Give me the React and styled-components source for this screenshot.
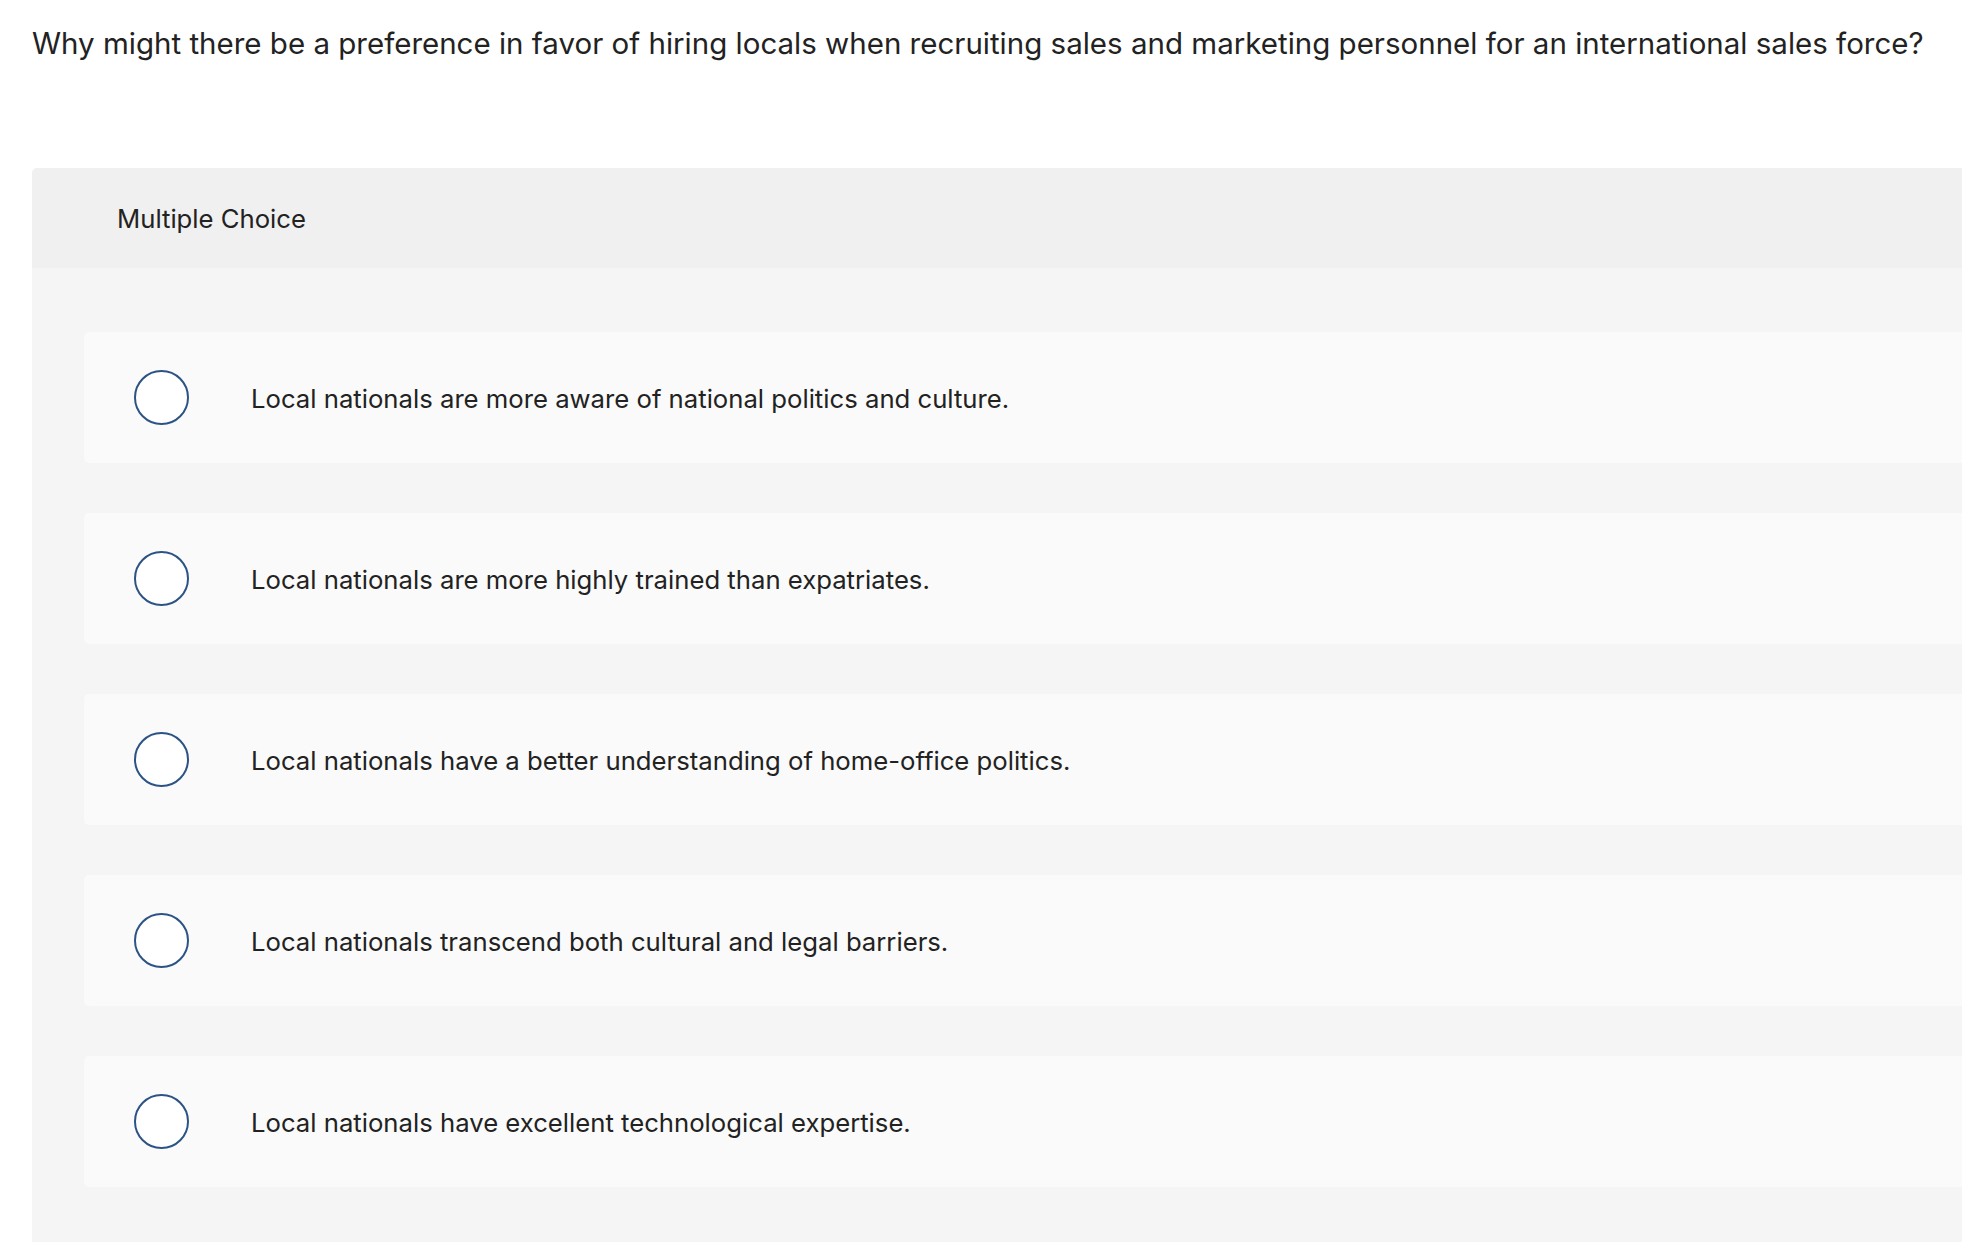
import styled, { createGlobalStyle } from 'styled-components';

const GlobalStyle = createGlobalStyle`
    html, body {
        margin:0;
        padding:0;
        background:#fff;
        overflow:hidden;
    }
    body{
        font-family:Inter, Lato, "Open Sans", sans-serif;
        color:#222;
    }
`

const options = [
    'Local nationals are more aware of national politics and culture.',
    'Local nationals are more highly trained than expatriates.',
    'Local nationals have a better understanding of home-office politics.',
    'Local nationals transcend both cultural and legal barriers.',
    'Local nationals have excellent technological expertise.',
];

const App = () => {
    return (
        <>
            <GlobalStyle />
            <Page>
                <Question>Why might there be a preference in favor of hiring locals when recruiting sales and marketing personnel for an international sales force?</Question>
                <Panel>
                    <PanelHeader>Multiple Choice</PanelHeader>
                    <OptionList>
                        {options.map((text, i) => (
                            <Option key={i}>
                                <Radio />
                                <OptionText>{text}</OptionText>
                            </Option>
                        ))}
                    </OptionList>
                </Panel>
            </Page>
        </>
    )
}

export default App;

const Page = styled.div`
    padding:27px 0 0 32px;
    width:2200px;
`

const Question = styled.h1`
    margin:0 0 109px 0;
    font-size:29.5px;
    font-weight:400;
    line-height:32px;
    color:#222;
    white-space:nowrap;
`

const Panel = styled.section`
    border-radius:5px 0 0 0;
    overflow:hidden;
    background:#f5f5f5;
    min-height:1100px;
`

const PanelHeader = styled.div`
    background:#f0f0f0;
    height:100px;
    box-sizing:border-box;
    padding:1px 0 0 85px;
    display:flex;
    align-items:center;
    font-size:25.7px;
    color:#222;
`

const OptionList = styled.div`
    display:flex;
    flex-direction:column;
    gap:50px;
    padding:64px 0 0 52px;
`

const Option = styled.div`
    display:flex;
    align-items:center;
    height:131px;
    box-sizing:border-box;
    padding-left:50px;
    background:#fafafa;
    border-radius:5px 0 0 5px;
`

const Radio = styled.span`
    display:block;
    width:55px;
    height:55px;
    box-sizing:border-box;
    border:2px solid #2c5385;
    border-radius:50%;
    background:#fff;
    flex-shrink:0;
`

const OptionText = styled.span`
    margin-left:62px;
    padding-top:2px;
    font-size:25.7px;
    color:#222;
    white-space:nowrap;
`
